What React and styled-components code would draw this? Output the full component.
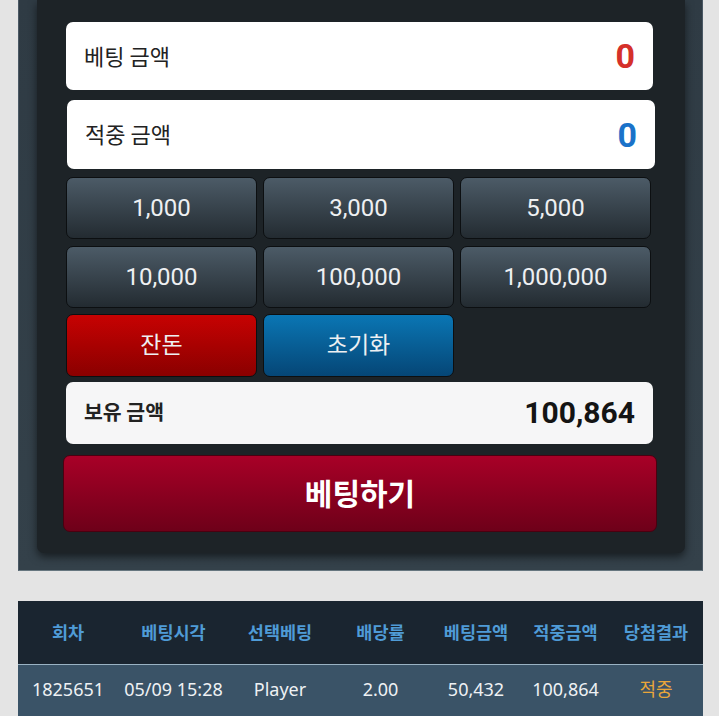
import React from "react";
import styled, { createGlobalStyle } from "styled-components";

const Global = createGlobalStyle`
  html, body { margin: 0; padding: 0; background: #e4e4e4; }
  body { font-family: "Noto Sans", "Noto Sans CJK KR", sans-serif; }
  * { box-sizing: border-box; }
`;

const Page = styled.div`
  width: 719px;
  height: 716px;
  overflow: hidden;
  padding: 0 16px 0 18px;
`;

const Outer = styled.div`
  background: linear-gradient(#2f3b44, #34414a);
  border-left: 1px solid #4a5864;
  border-right: 1px solid #4a5864;
  border-bottom: 1px solid #66767f;
  padding: 0 17px 17px 18px;
`;

const Inner = styled.div`
  background: #1d2327;
  border-radius: 0 0 7px 7px;
  box-shadow: 0 4px 8px rgba(0, 0, 0, 0.55);
  padding: 22px 28px 21px 26px;
  display: flex;
  flex-direction: column;
`;

const Field = styled.div`
  height: ${(p) => p.$h}px;
  margin: 0 ${(p) => p.$mr}px ${(p) => p.$mb}px ${(p) => p.$ml}px;
  background: ${(p) => p.$bg || "#ffffff"};
  border-radius: 7px;
  display: flex;
  align-items: center;
  justify-content: space-between;
  padding: 0 18px 0 18px;
`;

const Label = styled.span`
  font-family: "Noto Sans CJK KR", sans-serif;
  font-size: ${(p) => p.$size || 22}px;
  font-weight: ${(p) => p.$weight || 400};
  color: #222;
  line-height: 1;
  margin-top: -3px;
`;

const Value = styled.span`
  font-family: Roboto, "Noto Sans", sans-serif;
  font-weight: 700;
  font-size: ${(p) => p.$size}px;
  color: ${(p) => p.$color};
  line-height: 1;
`;

const Grid = styled.div`
  display: grid;
  grid-template-columns: repeat(3, 191px);
  column-gap: 6px;
  margin: 0 6px ${(p) => p.$mb}px 3px;
`;

const tones = {
  gray: "linear-gradient(#4c5b67, #232b31)",
  red: "linear-gradient(#c70202, #8a0000)",
  blue: "linear-gradient(#0a76b4, #054676)",
};

const Btn = styled.div`
  height: ${(p) => p.$h}px;
  background: ${(p) => tones[p.$tone]};
  border: 1px solid #0c0f11;
  border-radius: 7px;
  display: flex;
  align-items: center;
  justify-content: center;
  color: #eef0f2;
  font-family: Roboto, "Noto Sans CJK KR", sans-serif;
  font-size: 24px;
  font-weight: 400;
  line-height: 1;
`;

const KoBtnText = styled.span`
  font-family: "Noto Sans CJK KR", sans-serif;
  font-size: 23px;
  line-height: 1;
  margin-top: -4px;
`;

const BetButton = styled.div`
  height: 77px;
  background: linear-gradient(#a80027, #6e0019);
  border: 1px solid #4a0010;
  border-radius: 7px;
  display: flex;
  align-items: center;
  justify-content: center;
  color: #fff;
  font-family: "Noto Sans CJK KR", sans-serif;
  font-weight: 700;
  font-size: 30px;
  line-height: 1;
  padding-bottom: 4px;
`;

const Table = styled.div`
  margin-top: 30px;
`;

const cols = "100px 111px 102px 99px 92px 87px 94px";

const HeadRow = styled.div`
  display: grid;
  grid-template-columns: ${cols};
  height: 64px;
  align-items: center;
  background: #1a2530;
  border-bottom: 1px solid #9ab3c4;
`;

const HeadCell = styled.div`
  text-align: center;
  font-family: "Noto Sans CJK KR", sans-serif;
  font-weight: 700;
  font-size: 17.5px;
  color: #4f9bd6;
  line-height: 1;
  padding-bottom: 2px;
`;

const BodyRow = styled.div`
  display: grid;
  grid-template-columns: ${cols};
  height: 52px;
  align-items: center;
  background: #3a5367;
`;

const Cell = styled.div`
  text-align: center;
  font-family: "Noto Sans", "Noto Sans CJK KR", sans-serif;
  font-size: 18px;
  color: ${(p) => p.$color || "#eef1f4"};
  white-space: nowrap;
  line-height: 1;
  padding-bottom: 4px;
`;

const chips = [
  ["1,000", "3,000", "5,000"],
  ["10,000", "100,000", "1,000,000"],
];

const heads = ["회차", "베팅시각", "선택베팅", "배당률", "베팅금액", "적중금액", "당첨결과"];
const row = ["1825651", "05/09 15:28", "Player", "2.00", "50,432", "100,864"];

export default function App() {
  return (
    <Page>
      <Global />
      <Outer>
        <Inner>
          <Field $h={68} $ml={3} $mr={4} $mb={10}>
            <Label>베팅 금액</Label>
            <Value $size={34} $color="#d5302a">0</Value>
          </Field>
          <Field $h={69} $ml={4} $mr={2} $mb={8}>
            <Label>적중 금액</Label>
            <Value $size={34} $color="#1a72c9">0</Value>
          </Field>
          <Grid $mb={7}>
            {chips[0].map((c) => (
              <Btn key={c} $h={62} $tone="gray">{c}</Btn>
            ))}
          </Grid>
          <Grid $mb={6}>
            {chips[1].map((c) => (
              <Btn key={c} $h={62} $tone="gray">{c}</Btn>
            ))}
          </Grid>
          <Grid $mb={5}>
            <Btn $h={63} $tone="red"><KoBtnText>잔돈</KoBtnText></Btn>
            <Btn $h={63} $tone="blue"><KoBtnText>초기화</KoBtnText></Btn>
          </Grid>
          <Field $h={62} $ml={3} $mr={4} $mb={11} $bg="#f6f6f7">
            <Label $size={20.5} $weight={700}>보유 금액</Label>
            <Value $size={30} $color="#141414">100,864</Value>
          </Field>
          <BetButton>베팅하기</BetButton>
        </Inner>
      </Outer>
      <Table>
        <HeadRow>
          {heads.map((h) => (
            <HeadCell key={h}>{h}</HeadCell>
          ))}
        </HeadRow>
        <BodyRow>
          {row.map((r) => (
            <Cell key={r}>{r}</Cell>
          ))}
          <Cell $color="#e9a63a">적중</Cell>
        </BodyRow>
      </Table>
    </Page>
  );
}
